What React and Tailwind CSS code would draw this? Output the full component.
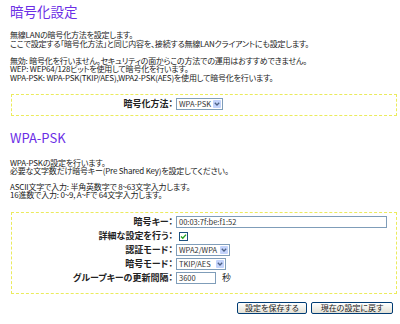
import React from "react";

function Select({ value, w }) {
  return (
    <div className={`flex h-[12px] items-stretch border border-[#7f9db9] bg-white ${w}`}>
      <span className="flex-1 overflow-hidden whitespace-nowrap pl-[2px] text-[7.5px] leading-[10px] text-[#333]">{value}</span>
      <span className="m-px flex w-[8px] items-center justify-center rounded-[1px] bg-[#c3d3fb]">
        <svg width="6" height="4" viewBox="0 0 6 4">
          <path d="M0.8 0.8 L3 3 L5.2 0.8" stroke="#4d6185" strokeWidth="1.3" fill="none" />
        </svg>
      </span>
    </div>
  );
}

function Input({ value, w }) {
  return (
    <div className={`flex h-[12px] items-center border border-[#7f9db9] bg-white pl-[2px] text-[7.5px] leading-[10px] text-[#333] ${w}`}>
      {value}
    </div>
  );
}

function Label({ children }) {
  return <div className="text-right text-[9px] font-bold leading-[14px] text-[#222]">{children}</div>;
}

export default function App() {
  return (
    <div className="h-[324px] w-[400px] overflow-hidden bg-white pl-[10px] font-['Noto_Sans_CJK_JP',sans-serif] text-[#222] [font-feature-settings:'palt']">
      <h1 className="mt-[4px] text-[13.5px] leading-[14px] text-[#6b2ee6]">暗号化設定</h1>
      <div className="mt-[13px] text-[8px] leading-[8.5px] tracking-[-0.2px]">
        <p>無線LANの暗号化方法を設定します。</p>
        <p>ここで設定する「暗号化方法」と同じ内容を、接続する無線LANクライアントにも設定します。</p>
        <p className="mt-[8.5px]">無効: 暗号化を行いません。セキュリティの面からこの方法での運用はおすすめできません。</p>
        <p>WEP: WEP64/128ビットを使用して暗号化を行います。</p>
        <p>WPA-PSK: WPA-PSK(TKIP/AES),WPA2-PSK(AES)を使用して暗号化を行います。</p>
      </div>

      <div className="ml-px mt-[12px] h-[22px] w-[386px] border border-dashed border-[#ebeb5c] pt-[3px]">
        <div className="grid grid-cols-[161px_1fr] items-center gap-x-[3px]">
          <div className="text-right text-[9px] font-bold leading-[12px]">暗号化方法：</div>
          <Select value="WPA-PSK" w="w-[47px]" />
        </div>
      </div>

      <h2 className="mt-[15px] text-[13px] leading-[13px] text-[#6b2ee6]">WPA-PSK</h2>
      <div className="mt-[15px] text-[8px] leading-[8px] tracking-[-0.2px]">
        <p>WPA-PSKの設定を行います。</p>
        <p>必要な文字数だけ暗号キー(Pre Shared Key)を設定してください。</p>
        <p className="mt-[8px]">ASCII文字で入力: 半角英数字で 8~63文字入力します。</p>
        <p>16進数で入力: 0~9, A~Fで 64文字入力します。</p>
      </div>

      <div className="ml-px mt-[13px] w-[386px] border border-dashed border-[#ebeb5c] pb-[8px] pt-[2px]">
        <div className="grid grid-cols-[161px_1fr] grid-rows-[14px_14px_14px_14px_14px] items-center gap-x-[3px]">
          <Label>暗号キー：</Label>
          <Input value="00:03:7f:be:f1:52" w="w-[211px]" />
          <Label>詳細な設定を行う：</Label>
          <div className="flex">
            <span className="ml-[3px] flex h-[9px] w-[9px] items-center justify-center border border-[#1c5180] bg-white">
              <svg width="7" height="7" viewBox="0 0 7 7">
                <path d="M1 3.4 L2.8 5.2 L6 1.6" stroke="#21a121" strokeWidth="1.4" fill="none" />
              </svg>
            </span>
          </div>
          <Label>認証モード：</Label>
          <Select value="WPA2/WPA" w="w-[54px]" />
          <Label>暗号モード：</Label>
          <Select value="TKIP/AES" w="w-[50px]" />
          <Label>グループキーの更新間隔：</Label>
          <div className="flex items-center">
            <Input value="3600" w="w-[40px]" />
            <span className="ml-[6px] text-[9px] leading-[12px]">秒</span>
          </div>
        </div>
      </div>

      <div className="mt-[8px] flex w-[387px] justify-end gap-[4px] pr-[4px]">
        <button className="h-[12px] w-[70px] rounded-[2px] border border-[#003c74] bg-linear-to-b from-white to-[#e3e1d6] text-[8px] leading-[10px] text-[#222]">設定を保存する</button>
        <button className="h-[12px] w-[82px] rounded-[2px] border border-[#003c74] bg-linear-to-b from-white to-[#e3e1d6] text-[8px] leading-[10px] text-[#222]">現在の設定に戻す</button>
      </div>
    </div>
  );
}
